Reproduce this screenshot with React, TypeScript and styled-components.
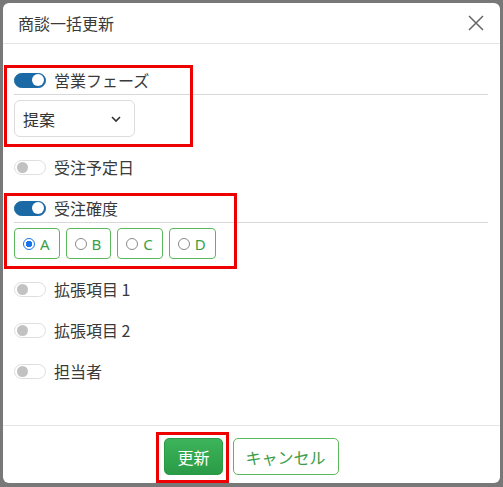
import React from 'react'
import styled, { createGlobalStyle } from 'styled-components'

const GlobalStyle = createGlobalStyle`
	html, body {
		margin: 0;
		padding: 0;
	}
	body {
		font-family: "Noto Sans CJK JP", "Noto Sans", sans-serif;
		color: #333;
	}
`

const Backdrop = styled.div`
	width: 503px;
	height: 487px;
	box-sizing: border-box;
	padding: 3px;
	background: #787878;
	overflow: hidden;
`

const Modal = styled.div`
	width: 497px;
	height: 480px;
	background: #fff;
	border-radius: 6px;
	display: flex;
	flex-direction: column;
`

const Header = styled.div`
	height: 40px;
	flex: none;
	border-bottom: 1px solid #e5e5e5;
	display: flex;
	align-items: center;
	justify-content: space-between;
	padding: 0 16px 0 15px;
`

const Title = styled.div`
	font-size: 16px;
	color: #3a3a3a;
`

const CloseButton = styled.button`
	border: none;
	background: none;
	padding: 0;
	width: 16px;
	height: 16px;
	display: flex;
	cursor: pointer;
`

const Body = styled.div`
	flex: 1;
	padding: 25px 12px 0 11px;
	display: flex;
	flex-direction: column;
	gap: 19px;
`

const Field = styled.div`
	position: relative;
`

const FieldHead = styled.div`
	height: 22px;
	display: flex;
	align-items: center;
	gap: 8px;
`

const Label = styled.span`
	font-size: 16px;
	line-height: 22px;
	color: #3a3a3a;
`

const Toggle = styled.span<{ $on?: boolean }>`
	position: relative;
	width: 32px;
	height: 15px;
	box-sizing: border-box;
	border-radius: 8px;
	flex: none;
	background: ${(p) => (p.$on ? '#1b6aa6' : '#fff')};
	border: 1px solid ${(p) => (p.$on ? '#1b6aa6' : '#dedede')};
	&::after {
		content: '';
		position: absolute;
		top: ${(p) => (p.$on ? '0.5px' : '1px')};
		left: ${(p) => (p.$on ? '17px' : '2px')};
		width: ${(p) => (p.$on ? '12px' : '11px')};
		height: ${(p) => (p.$on ? '12px' : '11px')};
		border-radius: 50%;
		background: ${(p) => (p.$on ? '#fff' : '#c2c2c2')};
	}
`

const Divider = styled.div`
	margin: 3px 0 5px;
	border-top: 1px solid #d8d8d8;
`

const Select = styled.div`
	width: 121px;
	height: 37px;
	box-sizing: border-box;
	border: 1px solid #dcdcdc;
	border-radius: 6px;
	display: flex;
	align-items: center;
	justify-content: space-between;
	padding: 0 12px 0 8px;
	font-size: 16px;
	color: #333;
`

const RadioGroup = styled.div`
	display: flex;
	gap: 6px;
`

const RadioChip = styled.label`
	height: 31px;
	box-sizing: border-box;
	border: 1px solid #5cb85c;
	border-radius: 4px;
	display: flex;
	align-items: center;
	gap: 5px;
	padding: 0 9px 0 8px;
	font-family: "Noto Sans", sans-serif;
	font-size: 15px;
	color: #3aa047;
`

const RadioDot = styled.span<{ $checked?: boolean }>`
	width: 12px;
	height: 12px;
	box-sizing: border-box;
	border-radius: 50%;
	border: 1px solid ${(p) => (p.$checked ? '#1a73e8' : '#8a8a8a')};
	background: ${(p) => (p.$checked ? 'radial-gradient(circle, #1a73e8 0 3px, #fff 3.5px)' : '#fff')};
`

const Footer = styled.div`
	flex: none;
	border-top: 1px solid #e5e5e5;
	padding: 12px 0 8px;
	display: flex;
	justify-content: center;
	gap: 10px;
`

const ButtonWrap = styled.div`
	position: relative;
`

const Button = styled.button<{ $primary?: boolean }>`
	height: 37px;
	padding: 0 12px;
	border-radius: 5px;
	font-family: "Noto Sans CJK JP", sans-serif;
	font-size: 16px;
	cursor: pointer;
	border: 1px solid ${(p) => (p.$primary ? '#2b9a46' : '#5cb85c')};
	background: ${(p) => (p.$primary ? 'linear-gradient(#3db45b, #2a9b46)' : '#fff')};
	color: ${(p) => (p.$primary ? '#fff' : '#3a9d48')};
`

const Mark = styled.span<{ $top: number; $left: number; $w: number; $h: number }>`
	position: absolute;
	top: ${(p) => p.$top}px;
	left: ${(p) => p.$left}px;
	width: ${(p) => p.$w}px;
	height: ${(p) => p.$h}px;
	box-sizing: border-box;
	border: 3px solid #ee0000;
	pointer-events: none;
`

const Chevron = () => (
	<svg width="12" height="8" viewBox="0 0 12 8">
		<path d="M2 2 L6 6 L10 2" fill="none" stroke="#333" strokeWidth="1.6" />
	</svg>
)

const Cross = () => (
	<svg width="16" height="16" viewBox="0 0 16 16">
		<path d="M1 1 L15 15 M15 1 L1 15" stroke="#666" strokeWidth="1.5" />
	</svg>
)

const options = ['A', 'B', 'C', 'D']

const App = () => {
	return (
		<>
			<GlobalStyle />
			<Backdrop>
				<Modal>
					<Header>
						<Title>商談一括更新</Title>
						<CloseButton>
							<Cross />
						</CloseButton>
					</Header>
					<Body>
						<Field>
							<Mark $top={-4} $left={-10} $w={189} $h={82} />
							<FieldHead>
								<Toggle $on />
								<Label>営業フェーズ</Label>
							</FieldHead>
							<Divider />
							<Select>
								<span>提案</span>
								<Chevron />
							</Select>
						</Field>
						<Field>
							<FieldHead>
								<Toggle />
								<Label>受注予定日</Label>
							</FieldHead>
						</Field>
						<Field>
							<Mark $top={-4} $left={-10} $w={233} $h={76} />
							<FieldHead>
								<Toggle $on />
								<Label>受注確度</Label>
							</FieldHead>
							<Divider />
							<RadioGroup>
								{options.map((o) => (
									<RadioChip key={o}>
										<RadioDot $checked={o === 'A'} />
										{o}
									</RadioChip>
								))}
							</RadioGroup>
						</Field>
						<Field>
							<FieldHead>
								<Toggle />
								<Label>拡張項目 1</Label>
							</FieldHead>
						</Field>
						<Field>
							<FieldHead>
								<Toggle />
								<Label>拡張項目 2</Label>
							</FieldHead>
						</Field>
						<Field>
							<FieldHead>
								<Toggle />
								<Label>担当者</Label>
							</FieldHead>
						</Field>
					</Body>
					<Footer>
						<ButtonWrap>
							<Mark $top={-6} $left={-8} $w={73} $h={51} />
							<Button $primary>更新</Button>
						</ButtonWrap>
						<Button>キャンセル</Button>
					</Footer>
				</Modal>
			</Backdrop>
		</>
	)
}

export default App
